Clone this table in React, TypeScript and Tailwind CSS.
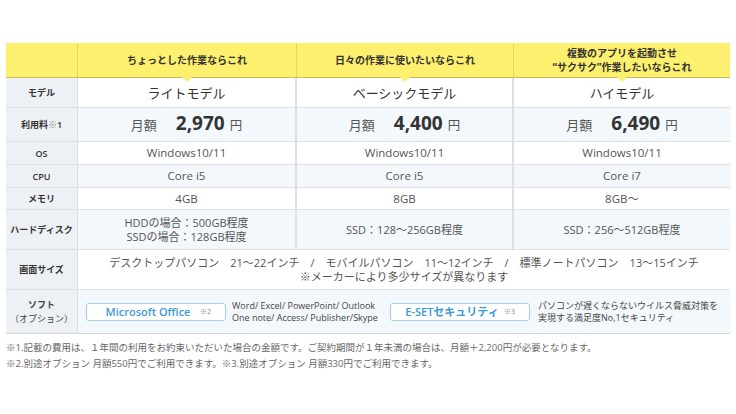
const font = { fontFamily: '"Open Sans", "Noto Sans CJK JP", sans-serif' };

const cols = "grid grid-cols-[71px_219px_217px_217px]";

function Label({ children }: { children: React.ReactNode }) {
  return (
    <div className="flex items-center justify-center bg-[#edf0f4] text-center text-[9px] font-semibold leading-[13px] text-[#333]">
      {children}
    </div>
  );
}

function Cell({ children, last }: { children: React.ReactNode; last?: boolean }) {
  return (
    <div
      className={`flex items-center justify-center border-l border-[#dcdfe3] text-center text-[11.5px] leading-[14px] text-[#555] ${
        last ? "" : "border-r"
      }`}
    >
      {children}
    </div>
  );
}

function HeadCell({ children }: { children: React.ReactNode }) {
  return (
    <div className="relative flex items-center justify-center border-l border-[#e6d75a] text-center text-[10px] font-bold leading-[14px] text-[#333]">
      {children}
      <span className="absolute left-1/2 top-full -ml-[5px] h-0 w-0 border-x-[5px] border-t-[5px] border-x-transparent border-t-[#fdf06e]" />
    </div>
  );
}

function Model({ children }: { children: React.ReactNode }) {
  return <span className="text-[13px] text-[#333]">{children}</span>;
}

function Price({ value }: { value: string }) {
  return (
    <div className="flex items-baseline gap-[19px] text-[#555]">
      <span className="text-[13px]">月額</span>
      <span>
        <span className="text-[19px] font-bold text-[#333]">{value}</span>
        <span className="ml-[5px] text-[12.5px]">円</span>
      </span>
    </div>
  );
}

function OptionBox({ name, note }: { name: string; note: string }) {
  return (
    <div className="relative flex h-[18px] w-[140px] shrink-0 items-center justify-center rounded-[3px] border border-[#a6cfec] bg-white pr-[16px]">
      <span className="text-[11px] font-semibold text-[#3a9ad8]">{name}</span>
      <span className="absolute right-[14px] text-[7px] text-[#888]">{note}</span>
    </div>
  );
}

export default function App() {
  return (
    <div className="h-[414px] w-[736px] bg-white" style={font}>
      <div className="ml-[6px] w-[724px] pt-[43px]">
        {/* header */}
        <div className={`${cols} h-[35px] border-b border-[#cbbd55] bg-[#fdf06e]`}>
          <div />
          <HeadCell>ちょっとした作業ならこれ</HeadCell>
          <HeadCell>日々の作業に使いたいならこれ</HeadCell>
          <HeadCell>
            <span>
              複数のアプリを起動させ
              <br />
              “サクサク”作業したいならこれ
            </span>
          </HeadCell>
        </div>

        <div className={`${cols} h-[30px] border-b border-[#dcdfe3] bg-white`}>
          <Label>モデル</Label>
          <Cell><Model>ライトモデル</Model></Cell>
          <Cell><Model>ベーシックモデル</Model></Cell>
          <Cell last><Model>ハイモデル</Model></Cell>
        </div>

        <div className={`${cols} h-[34px] border-b border-[#dcdfe3] bg-[#f3f8fc]`}>
          <Label>
            <span>
              利用料<span className="font-normal text-[#888]">※</span>1
            </span>
          </Label>
          <Cell><Price value="2,970" /></Cell>
          <Cell><Price value="4,400" /></Cell>
          <Cell last><Price value="6,490" /></Cell>
        </div>

        <div className={`${cols} h-[23px] border-b border-[#dcdfe3] bg-white`}>
          <Label>OS</Label>
          <Cell>Windows10/11</Cell>
          <Cell>Windows10/11</Cell>
          <Cell last>Windows10/11</Cell>
        </div>

        <div className={`${cols} h-[23px] border-b border-[#dcdfe3] bg-[#f3f8fc]`}>
          <Label>CPU</Label>
          <Cell>Core i5</Cell>
          <Cell>Core i5</Cell>
          <Cell last>Core i7</Cell>
        </div>

        <div className={`${cols} h-[22px] border-b border-[#dcdfe3] bg-white`}>
          <Label>メモリ</Label>
          <Cell>4GB</Cell>
          <Cell>8GB</Cell>
          <Cell last>8GB〜</Cell>
        </div>

        <div className={`${cols} h-[40px] border-b border-[#dcdfe3] bg-[#f3f8fc]`}>
          <Label>ハードディスク</Label>
          <Cell>
            <span className="text-[11px]">
              HDDの場合：500GB程度
              <br />
              SSDの場合：128GB程度
            </span>
          </Cell>
          <Cell><span className="text-[11px]">SSD：128〜256GB程度</span></Cell>
          <Cell last><span className="text-[11px]">SSD：256〜512GB程度</span></Cell>
        </div>

        <div className="grid h-[40px] grid-cols-[71px_653px] border-b border-[#dcdfe3] bg-white">
          <Label>画面サイズ</Label>
          <div className="flex items-center justify-center border-l border-[#dcdfe3] text-center text-[11px] leading-[14px] text-[#555]">
            <span className="whitespace-pre">
              デスクトップパソコン　21〜22インチ　/　モバイルパソコン　11〜12インチ　/　標準ノートパソコン　13〜15インチ
              <br />
              ※メーカーにより多少サイズが異なります
            </span>
          </div>
        </div>

        <div className="grid h-[44px] grid-cols-[71px_653px] border-b border-[#d2d6db] bg-[#f3f8fc]">
          <Label>
            <span className="font-normal leading-[14px] text-[#444]">
              <span className="font-semibold">ソフト</span>
              <br />
              （オプション）
            </span>
          </Label>
          <div className="flex items-center gap-[6px] border-l border-[#dcdfe3] pl-[8px] text-[9px] leading-[12px] text-[#444]">
            <OptionBox name="Microsoft Office" note="※2" />
            <span className="w-[152px]">
              Word/ Excel/ PowerPoint/ Outlook
              <br />
              One note/ Access/ Publisher/Skype
            </span>
            <OptionBox name="E-SETセキュリティ" note="※3" />
            <span className="ml-[2px]">
              パソコンが遅くならないウイルス脅威対策を
              <br />
              実現する満足度No,1セキュリティ
            </span>
          </div>
        </div>

        <div className="pt-[6px] text-[9.5px] leading-[16px] text-[#666]">
          <p>※1.記載の費用は、１年間の利用をお約束いただいた場合の金額です。ご契約期間が１年未満の場合は、月額＋2,200円が必要となります。</p>
          <p>※2.別途オプション 月額550円でご利用できます。※3.別途オプション 月額330円でご利用できます。</p>
        </div>
      </div>
    </div>
  );
}
